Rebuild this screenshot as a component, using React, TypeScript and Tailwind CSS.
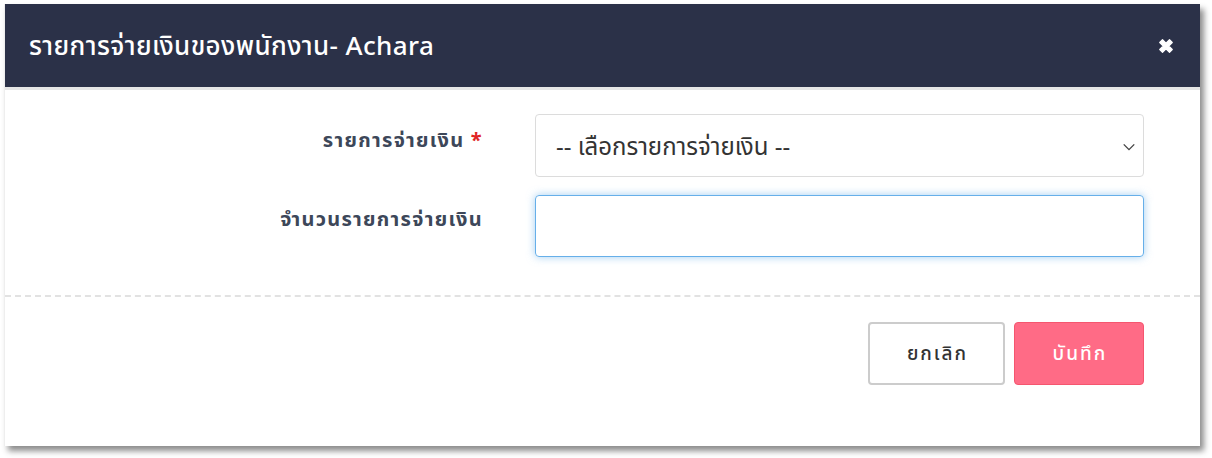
import React, { useState } from "react";

export default function App() {
    const [payType, setPayType] = useState("");
    const [amount, setAmount] = useState("");

    return (
        <div
            className="w-[1212px] h-[458px] bg-white pt-[4px] pl-[4px]"
            style={{ fontFamily: '"Noto Sans", "Noto Sans Thai", sans-serif' }}
        >
            <div className="w-[1196px] h-[442px] bg-white flex flex-col border-l border-[#eeeeee] shadow-[4px_5px_6px_rgba(0,0,0,0.45)]">
                {/* header */}
                <div className="h-[83px] bg-[#2b3148] flex items-center justify-between pl-[24px] pr-[24px]">
                    <h2 className="text-[26px] font-medium text-white tracking-[0.4px]">
                        รายการจ่ายเงินของพนักงาน- Achara
                    </h2>
                    <button className="text-white w-[20px] h-[20px]">
                        <svg viewBox="0 0 16 16" className="w-[20px] h-[20px]">
                            <path
                                d="M3 5.2 5.2 3 8 5.8 10.8 3 13 5.2 10.2 8 13 10.8 10.8 13 8 10.2 5.2 13 3 10.8 5.8 8Z"
                                fill="white"
                                stroke="white"
                                strokeWidth="1"
                                strokeLinejoin="round"
                            />
                        </svg>
                    </button>
                </div>
                <div className="h-[3px] bg-[#e6e6e6]" />

                {/* body */}
                <div className="pt-[24px] pb-[38px] pr-[56px] flex flex-col gap-[18px] border-b-2 border-dashed border-[#e2e2e2]">
                    <div className="flex">
                        <label className="w-[478px] shrink-0 text-right pt-[11px] text-[20px] font-bold text-[#3d4759] tracking-[1.3px]">
                            รายการจ่ายเงิน <span className="text-[#e02424]">*</span>
                        </label>
                        <div className="ml-[52px] flex-1 relative">
                            <select
                                className="w-full h-[63px] appearance-none border border-[#dcdcdc] rounded-[4px] pl-[20px] pr-[40px] text-[24px] text-[#333333] bg-white outline-none"
                                value={payType}
                                onChange={(e) => setPayType(e.target.value)}
                            >
                                <option value="">-- เลือกรายการจ่ายเงิน --</option>
                            </select>
                            <svg
                                viewBox="0 0 16 16"
                                className="absolute right-[8px] top-[26px] w-[14px] h-[14px] pointer-events-none"
                            >
                                <path d="M2 5l6 6 6-6" fill="none" stroke="#444" strokeWidth="1.6" />
                            </svg>
                        </div>
                    </div>
                    <div className="flex">
                        <label className="w-[478px] shrink-0 text-right pt-[9px] text-[20px] font-bold text-[#3d4759] tracking-[1.3px]">
                            จำนวนรายการจ่ายเงิน
                        </label>
                        <div className="ml-[52px] flex-1">
                            <input
                                type="text"
                                autoFocus
                                className="w-full h-[62px] border border-[#66afe9] rounded-[4px] px-[13px] text-[20px] text-[#333333] outline-none shadow-[0_0_8px_rgba(102,175,233,0.6)]"
                                value={amount}
                                onChange={(e) => setAmount(e.target.value)}
                            />
                        </div>
                    </div>
                </div>

                {/* footer */}
                <div className="pt-[25px] pr-[56px] flex justify-end gap-[9px]">
                    <button className="w-[137px] h-[63px] border-2 border-[#cccccc] rounded-[4px] bg-white text-[19px] font-medium text-[#333333] tracking-[2px] pl-[2px]">
                        ยกเลิก
                    </button>
                    <button className="w-[130px] h-[63px] border border-[#f5566f] rounded-[4px] bg-[#ff6b86] text-[19px] font-medium text-white tracking-[2px] pl-[2px]">
                        บันทึก
                    </button>
                </div>
            </div>
        </div>
    );
}
